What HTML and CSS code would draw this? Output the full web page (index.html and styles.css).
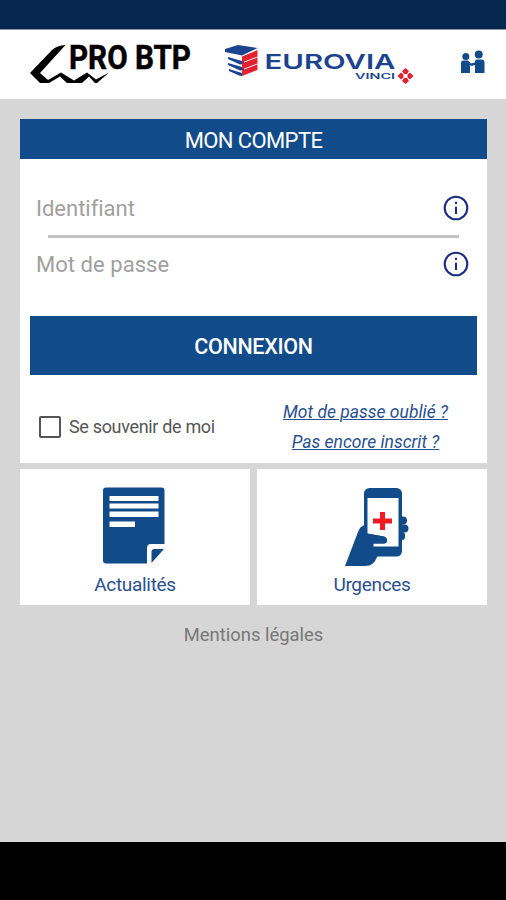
FILE: index.html
```html
<!DOCTYPE html>
<html lang="fr">
<head>
<meta charset="utf-8">
<meta name="viewport" content="width=device-width, initial-scale=1">
<title>Mon compte</title>
<link rel="stylesheet" href="styles.css">
</head>
<body>
<div class="status-bar"></div>
<header class="header">
  <svg class="logo-probtp" width="170" height="52" viewBox="28 36 170 52">
    <path d="M65.500 45Q57 45.500 52 50L30 73L40 83H49L60 76.500L67 83H82L89 76.500L95 83H97L109 72.500L96 79.500L87 72.500L74 80.500L61 72.500L48 80L40 73Z"/>
    <text class="probtp-name" x="69" y="69" textLength="122" lengthAdjust="spacingAndGlyphs">PRO BTP</text>
  </svg>
  <svg class="logo-eurovia" width="192" height="46" viewBox="223 42 192 46">
    <path fill="#1c4390" d="M225 49L238 45L257.500 48L242 55.500L225 52Z"/>
    <path fill="#1c4390" d="M228 57L242 61L244 60V64L240 64.500L228 59ZM228 63L242 67L244 66V70L240 70.500L228 65ZM229 69L242 73V76L239 75.500L229 71Z"/>
    <path fill="#e32231" d="M242 56.500L257.500 50V56.500L242 62.500ZM242 63.300L257.500 57.300V63.500L242 69.500ZM242 70.300L257.500 64.300V70L242 76Z"/>
    <text class="eurovia-name" x="264.500" y="69" textLength="131" lengthAdjust="spacingAndGlyphs">EUROVIA</text>
    <text class="vinci-name" x="355" y="79.300" textLength="40" lengthAdjust="spacingAndGlyphs">VINCI</text>
    <path fill="#e32231" d="M402 71L405.500 68L409 71L407 74H404ZM402 81L405.500 84L409 81L407 78H404ZM401 72.500L397.500 76L401 79.500L403.500 77.500V74.500ZM410 72.500L413.500 76L410 79.500L407.500 77.500V74.500Z"/>
  </svg>
  <svg class="contacts" width="26" height="26" viewBox="460 49 26 26" fill="#124b89">
    <circle cx="465.800" cy="56.500" r="3.500"/>
    <circle cx="478.700" cy="54.500" r="4"/>
    <path d="M461 63Q461 60.500 463.500 60.500H468L471 63.500L475 62.500V61.500Q475 59.500 477 59.500H481.500Q484.500 59.500 484.500 62.500V73H475V65L471.500 66L470 65V73H461Z"/>
  </svg>
</header>
<main class="content">
  <section class="card">
    <h1 class="card-title">MON COMPTE</h1>
    <div class="field">
      <span class="field-name ident">Identifiant</span>
      <svg class="info" width="26" height="26" viewBox="0 0 26 26"><circle cx="13" cy="13" r="11.300"/><path d="M13 11.700V19M13 6.800V9"/></svg>
    </div>
    <div class="separator"></div>
    <div class="field">
      <span class="field-name password">Mot de passe</span>
      <svg class="info" width="26" height="26" viewBox="0 0 26 26"><circle cx="13" cy="13" r="11.300"/><path d="M13 11.700V19M13 6.800V9"/></svg>
    </div>
    <button class="submit">CONNEXION</button>
    <div class="options">
      <label class="remember"><span class="box"></span><span>Se souvenir de moi</span></label>
      <div class="links"><a class="forgot">Mot de passe oublié ?</a><a class="signup">Pas encore inscrit ?</a></div>
    </div>
  </section>
  <nav class="tiles">
    <a class="tile">
      <svg width="64" height="80" viewBox="102 486 64 80">
        <path fill="#124b89" d="M106 487.500H161.500Q164.500 487.500 164.500 490.500V544H151Q147 544 147 548V563.500H106Q103 563.500 103 560.500V490.500Q103 487.500 106 487.500Z"/>
        <path fill="#fff" d="M109.500 496H158.500V501H109.500ZM109.500 503.500H158.500V508.500H109.500ZM109.500 511.500H158.500V517H109.500ZM109.500 521.500H135V527H109.500Z"/>
        <path fill="#124b89" d="M164 549L151.500 563V552Q151.500 549 154.500 549Z"/>
      </svg>
      <span class="news">Actualités</span>
    </a>
    <a class="tile">
      <svg width="66" height="80" viewBox="344 486 66 80">
        <g fill="#124b89">
          <rect x="364" y="488" width="38" height="68.500" rx="5.500"/>
          <path d="M365 525Q360 526 358 532L345 566H365Q374 566 377 557L386 546V534L368 533Z"/>
          <rect x="398" y="516.500" width="9" height="8" rx="4"/><rect x="398" y="524.500" width="10.500" height="8" rx="4"/><rect x="398" y="532" width="7" height="8" rx="3"/>
        </g>
        <path fill="#fff" d="M367.500 498H398.500V546.500H373.500V543.500H384Q387 543 387 540.500Q387 537.500 384 536.500L367.500 533.500Z"/>
        <path fill="#124b89" d="M367 533.500L384 536.500Q387 537.500 387 540.500Q387 543 384 543.500H367Z"/>
        <path fill="#f21b24" d="M380 512H385V518.500H392V523.500H385V530H380V523.500H373V518.500H380Z"/>
      </svg>
      <span class="emergency">Urgences</span>
    </a>
  </nav>
  <a class="legal">Mentions légales</a>
</main>
<div class="nav-bar"></div>
</body>
</html>
```

FILE: styles.css
```css
* { box-sizing: border-box; }
body {
  margin: 0;
  height: 900px;
  display: flex;
  flex-direction: column;
  background: #d6d6d6;
  font-family: Roboto, "Liberation Sans", sans-serif;
  overflow: hidden;
}
svg { display: block; flex: none; overflow: visible; }
.status-bar {
  height: 30px;
  flex: none;
  background: #04264f;
  border-bottom: 1px solid #8993ad;
}
.header {
  height: 69px;
  flex: none;
  display: flex;
  align-items: flex-start;
  padding: 6px 0 0 28px;
  background: #fff;
}
.logo-eurovia { margin: 6px 0 0 25px; }
.contacts { margin: 13px 0 0 45px; }
.probtp-name { font-size: 32.5px; font-weight: 700; stroke: #000; stroke-width: 0.5px; }
.eurovia-name { font-family: Inter, sans-serif; font-size: 20.5px; font-weight: 600; fill: #1c4390; }
.vinci-name { font-family: Inter, sans-serif; font-size: 7px; font-weight: 600; fill: #1c4390; }
.content {
  flex: 1;
  display: flex;
  flex-direction: column;
  padding: 20px 19px 0 20px;
}
.card { height: 344px; background: #fff; }
.card-title {
  margin: 0 0 22px;
  height: 40px;
  line-height: 43px;
  background: #124b89;
  color: #fff;
  font-size: 22px;
  letter-spacing: -0.6px;
  font-weight: 400;
  text-align: center;
}
.field {
  height: 54px;
  display: flex;
  align-items: center;
  justify-content: space-between;
  padding: 0 18px 0 16px;
}
.field-name { color: #a0a0a0; font-size: 22px; padding-top: 1px; }
.ident { letter-spacing: -0.02px; }
.password { letter-spacing: 0.05px; }
.info { fill: none; stroke: #1c2d80; stroke-width: 2.1; }
.separator { height: 3px; margin: 0 28px -1px; background: #c2c2c2; }
.submit {
  display: block;
  width: 447px;
  height: 59px;
  margin: 25px 10px 0;
  padding: 1px 0 0;
  border: 0;
  background: #124b89;
  color: #fff;
  font: 500 21.5px Roboto, sans-serif;
  letter-spacing: -0.3px;
}
.options {
  display: flex;
  justify-content: space-between;
  padding: 22px 39px 0 19px;
}
.remember {
  display: flex;
  align-items: center;
  gap: 8px;
  height: 59px;
  color: #555;
  font-size: 18px;
  letter-spacing: -0.33px;
}
.box { width: 22px; height: 22px; border: 2px solid #555; border-radius: 2px; }
.links {
  display: flex;
  flex-direction: column;
  align-items: center;
  color: #29508f;
  font-size: 17.5px;
  font-style: italic;
  line-height: 30px;
  text-decoration: underline;
  text-decoration-thickness: 1px;
}
.tiles { display: grid; grid-template-columns: 230px 230px; gap: 7px; margin-top: 6px; }
.tile {
  height: 136px;
  display: flex;
  flex-direction: column;
  align-items: center;
  padding-top: 17px;
  background: #fff;
  color: #29508f;
  font-size: 19px;
  letter-spacing: -0.3px;
  line-height: 25px;
}
.tile svg { margin-bottom: 6px; }
.tile:first-child svg { margin-left: -2px; }
.tile:last-child svg { margin-right: -10px; }
.legal {
  align-self: center;
  margin-top: 17px;
  color: #777;
  font-size: 18.4px;
  line-height: 25px;
}
.nav-bar { height: 58px; flex: none; background: #000; }
```
